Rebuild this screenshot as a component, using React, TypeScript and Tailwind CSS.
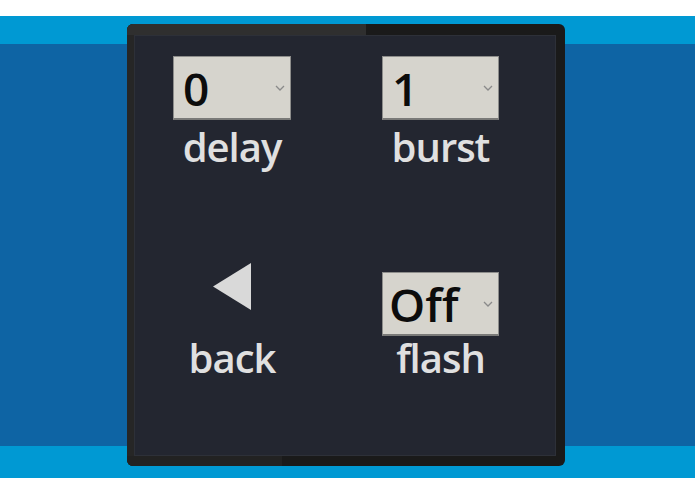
import React from "react";

function Chevron() {
  return (
    <svg width="10" height="6" viewBox="0 0 10 6" className="absolute right-[5px] top-1/2 -translate-y-1/2">
      <polyline points="1,1 5,5 9,1" fill="none" stroke="#8a8a8a" strokeWidth="1.3" />
    </svg>
  );
}

function Select({ value, pad }: { value: string; pad: string }) {
  return (
    <div
      className={`relative w-full h-[64px] bg-[#d6d4cd] border border-[#8d8d8b] border-b-2 border-b-[#7a7a78] flex items-center ${pad}`}
    >
      <span className="text-[46px] leading-none font-semibold text-[#0c0c0c]">{value}</span>
      <Chevron />
    </div>
  );
}

function Label({ text, extra = "" }: { text: string; extra?: string }) {
  return <div className={`text-[40px] leading-[54px] font-semibold tracking-[-1px] text-[#e0e0e0] text-center ${extra}`}>{text}</div>;
}

export default function App() {
  return (
    <div className="w-[695px] h-[494px] bg-white pt-[16px]" style={{ fontFamily: '"Open Sans", "Noto Sans", sans-serif' }}>
      <div className="h-[462px] pt-[8px] bg-[linear-gradient(to_bottom,#0099d3_28px,#0e64a4_28px,#0e64a4_430px,#0099d3_430px)]">
        <div className="relative ml-[127px] w-[438px] h-[442px] rounded-[6px] bg-[#1a1a1a] pt-[11px] pl-[7px] pr-[9px] pb-[10px]">
          <div className="absolute left-0 top-0 w-[7px] h-full bg-[#262626] rounded-l-[6px]" />
          <div className="absolute left-0 top-0 w-[239px] h-[11px] bg-[#2f2f2f] rounded-tl-[6px]" />
          <div className="absolute left-0 bottom-0 w-[155px] h-[10px] bg-[#222222] rounded-bl-[6px]" />
          <div className="relative h-full bg-[#232630] border border-[#2d3038] pt-[20px]">
            <div className="flex pl-[38px] gap-[91px]">
              <div className="w-[118px] flex flex-col items-center">
                <Select value="0" pad="pl-[9px]" />
                <Label text="delay" />
              </div>
              <div className="w-[117px] flex flex-col items-center">
                <Select value="1" pad="pl-[9px]" />
                <Label text="burst" />
              </div>
            </div>
            <div className="flex pl-[38px] gap-[91px] mt-[89px]">
              <div className="w-[118px] flex flex-col items-center">
                <svg width="38" height="47" viewBox="0 0 38 47">
                  <polygon points="38,0 38,47 0,23.5" fill="#d9d9d9" />
                </svg>
                <Label text="back" extra="mt-[21px]" />
              </div>
              <div className="w-[117px] flex flex-col items-center">
                <div className="w-full mt-[9px]">
                  <Select value="Off" pad="pl-[6px]" />
                </div>
                <Label text="flash" extra="-mt-[5px]" />
              </div>
            </div>
          </div>
        </div>
      </div>
    </div>
  );
}
